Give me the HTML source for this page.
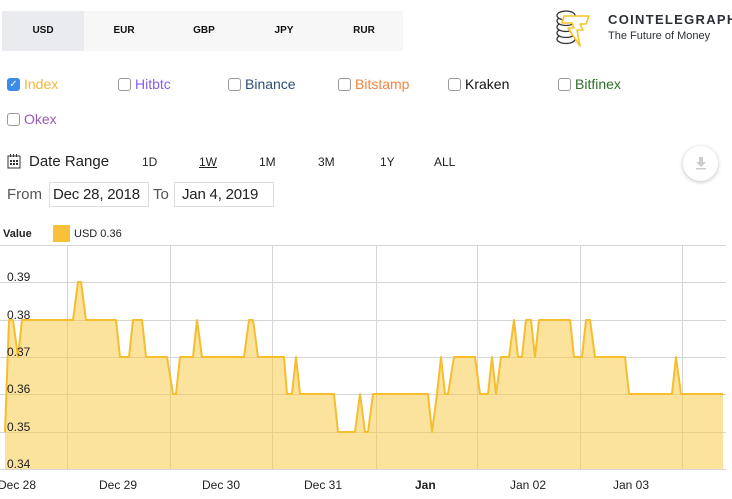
<!DOCTYPE html>
<html><head><meta charset="utf-8"><style>
*{margin:0;padding:0;box-sizing:border-box}
body{width:732px;height:499px;background:#fff;font-family:"Liberation Sans",sans-serif;position:relative;overflow:hidden;color:#222}
.abs{position:absolute;white-space:nowrap}
.tabs{left:2px;top:11px;width:401px;height:40px;background:#f7f7f7}
.tab{position:absolute;top:0;height:40px;width:80px;line-height:40px;text-align:center;font-size:10px;font-weight:bold;color:#111}
.cb{position:absolute;font-size:14px;line-height:16px;display:flex;align-items:center;white-space:nowrap}
.cb i{display:inline-block;width:13px;height:13px;border:1px solid #999;border-radius:3px;margin-right:4px;background:#fff}
.rng{font-size:12px;top:155px;position:absolute}
.inp{position:absolute;top:182px;height:25px;border:1px solid #ddd;font-size:15px;line-height:23px;padding-left:3px;color:#222;white-space:nowrap;overflow:hidden;letter-spacing:-0.2px}
</style></head><body>
<div class="abs tabs">
<div class="tab" style="left:0;width:82px;background:#e9ebee">USD</div>
<div class="tab" style="left:82px">EUR</div>
<div class="tab" style="left:162px">GBP</div>
<div class="tab" style="left:242px">JPY</div>
<div class="tab" style="left:322px">RUR</div>
</div>
<svg class="abs" style="left:555px;top:10px" width="42" height="42" viewBox="0 0 42 42">
<g fill="#fff" stroke="#333" stroke-width="1.3">
<ellipse cx="11" cy="29" rx="9" ry="4.5"/><ellipse cx="11" cy="23" rx="9" ry="4.5"/><ellipse cx="11" cy="17" rx="9" ry="4.5"/><ellipse cx="11" cy="11" rx="9" ry="4.5"/><ellipse cx="11" cy="5.5" rx="9" ry="4.5"/></g>
<path d="M9 6 L34 6 L31 14 L25 14 L28 20 L22 20 L25 36 L13 18 L19 18 L17 13 L7 13 Z" fill="#fff" stroke="#f7c325" stroke-width="1.6" stroke-linejoin="round"/>
</svg>
<div class="abs" style="left:608px;top:12px;font-size:13px;font-weight:bold;letter-spacing:1.3px;color:#2b3038">COINTELEGRAPH</div>
<div class="abs" style="left:608px;top:30px;font-size:11px;color:#2b3038">The Future of Money</div>

<div class="cb" style="left:7px;top:76px;color:#f7b733"><i style="background:#3b8beb;border-color:#3b8beb;color:#fff;font-size:10px;line-height:11px;text-align:center;font-style:normal">✓</i>Index</div>
<div class="cb" style="left:118px;top:76px;color:#8a5cf6"><i></i>Hitbtc</div>
<div class="cb" style="left:228px;top:76px;color:#2c4e7a"><i></i>Binance</div>
<div class="cb" style="left:338px;top:76px;color:#f5843d"><i></i>Bitstamp</div>
<div class="cb" style="left:448px;top:76px;color:#111"><i></i>Kraken</div>
<div class="cb" style="left:558px;top:76px;color:#2f6e2a"><i></i>Bitfinex</div>
<div class="cb" style="left:7px;top:111px;color:#9b59b6"><i></i>Okex</div>

<svg class="abs" style="left:7px;top:154px" width="14" height="15" viewBox="0 0 14 15"><rect x="1" y="2" width="12" height="12" fill="none" stroke="#333"/><g fill="#333"><rect x="3" y="0" width="1" height="3"/><rect x="6" y="0" width="1" height="3"/><rect x="9" y="0" width="1" height="3"/><rect x="3" y="6" width="2" height="2"/><rect x="6" y="6" width="2" height="2"/><rect x="9" y="6" width="2" height="2"/><rect x="3" y="9" width="2" height="2"/><rect x="6" y="9" width="2" height="2"/><rect x="9" y="9" width="2" height="2"/></g></svg>
<div class="abs" style="left:29px;top:153px;font-size:15px;color:#222">Date Range</div>
<div class="rng" style="left:142px">1D</div>
<div class="rng" style="left:199px;text-decoration:underline">1W</div>
<div class="rng" style="left:259px">1M</div>
<div class="rng" style="left:318px">3M</div>
<div class="rng" style="left:380px">1Y</div>
<div class="rng" style="left:434px">ALL</div>
<div class="abs" style="left:683px;top:146px;width:35px;height:35px;border-radius:50%;background:#fff;box-shadow:0 1px 4px rgba(0,0,0,.25)"></div>
<svg class="abs" style="left:694px;top:156px" width="14" height="14"><path d="M5 1h4v5h3l-5 5-5-5h3z" fill="#ccc"/><rect x="2" y="12" width="10" height="1.5" fill="#ccc"/></svg>

<div class="abs" style="left:7px;top:186px;font-size:15px;color:#555">From</div>
<div class="inp" style="left:49px;width:100px">Dec 28, 2018</div>
<div class="abs" style="left:153px;top:186px;font-size:15px;color:#555">To</div>
<div class="inp" style="left:174px;width:100px;padding-left:7px">Jan 4, 2019</div>

<div class="abs" style="left:3px;top:228px;font-size:11px;font-weight:bold">Value</div>
<div class="abs" style="left:53px;top:225px;width:17px;height:17px;background:#f9c03a"></div>
<div class="abs" style="left:74px;top:228px;font-size:11px">USD 0.36</div>

<svg class="abs" style="left:0;top:0" width="732" height="499">
<g stroke="#d6d6d6" stroke-width="1">
<line x1="0" y1="245.5" x2="726" y2="245.5"/><line x1="0" y1="282.5" x2="726" y2="282.5"/><line x1="0" y1="320.5" x2="726" y2="320.5"/><line x1="0" y1="357.5" x2="726" y2="357.5"/><line x1="0" y1="394.5" x2="726" y2="394.5"/><line x1="0" y1="432.5" x2="726" y2="432.5"/><line x1="0" y1="469.5" x2="726" y2="469.5"/>
<line x1="67.5" y1="245" x2="67.5" y2="469"/><line x1="170.5" y1="245" x2="170.5" y2="469"/><line x1="272.5" y1="245" x2="272.5" y2="469"/><line x1="376.5" y1="245" x2="376.5" y2="469"/><line x1="477.5" y1="245" x2="477.5" y2="469"/><line x1="580.5" y1="245" x2="580.5" y2="469"/><line x1="682.5" y1="245" x2="682.5" y2="469"/>
</g>
<path fill="rgba(248,200,60,0.5)" stroke="none" d="M5 469 L5 432 L9 320 L13 320 L18 357 L22 320 L73 320 L78 282 L81 282 L86 320 L116 320 L120 357 L129 357 L133 320 L142 320 L146 357 L167 357 L173 394 L176 394 L180 357 L193 357 L197 320 L202 357 L244 357 L249 320 L253 320 L258 357 L284 357 L287 394 L292 394 L296 357 L300 394 L334 394 L338 432 L355 432 L360 394 L365 432 L368 432 L373 394 L428 394 L432 432 L437 394 L441 357 L445 394 L448 394 L454 357 L475 357 L480 394 L488 394 L492 357 L496 394 L501 357 L509 357 L514 320 L518 357 L522 357 L526 320 L531 320 L535 357 L539 320 L570 320 L574 357 L582 357 L586 320 L590 320 L595 357 L625 357 L629 394 L672 394 L676 357 L681 394 L723 394 L723 469 Z"/>
<path fill="none" stroke="#f6bd2e" stroke-width="2" stroke-linejoin="round" d="M5 432 L9 320 L13 320 L18 357 L22 320 L73 320 L78 282 L81 282 L86 320 L116 320 L120 357 L129 357 L133 320 L142 320 L146 357 L167 357 L173 394 L176 394 L180 357 L193 357 L197 320 L202 357 L244 357 L249 320 L253 320 L258 357 L284 357 L287 394 L292 394 L296 357 L300 394 L334 394 L338 432 L355 432 L360 394 L365 432 L368 432 L373 394 L428 394 L432 432 L437 394 L441 357 L445 394 L448 394 L454 357 L475 357 L480 394 L488 394 L492 357 L496 394 L501 357 L509 357 L514 320 L518 357 L522 357 L526 320 L531 320 L535 357 L539 320 L570 320 L574 357 L582 357 L586 320 L590 320 L595 357 L625 357 L629 394 L672 394 L676 357 L681 394 L723 394"/>
<g font-family="Liberation Sans, sans-serif" font-size="12" fill="#222">
<text x="7" y="281">0.39</text><text x="7" y="319">0.38</text><text x="7" y="356">0.37</text><text x="7" y="393">0.36</text><text x="7" y="431">0.35</text><text x="7" y="468">0.34</text>
<text x="-2" y="489">Dec 28</text><text x="99" y="489">Dec 29</text><text x="202" y="489">Dec 30</text><text x="304" y="489">Dec 31</text><text x="415" y="489" font-weight="bold">Jan</text><text x="510" y="489">Jan 02</text><text x="613" y="489">Jan 03</text>
</g>
</svg>
</body></html>
